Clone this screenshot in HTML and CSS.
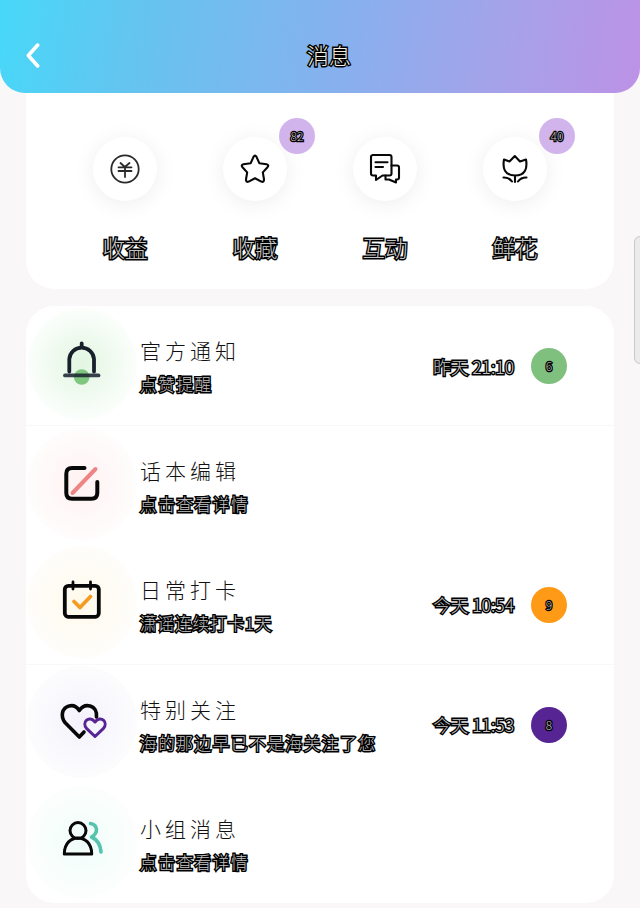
FILE: index.html
```html
<!DOCTYPE html>
<html lang="zh-CN">
<head>
  <meta charset="UTF-8" />
  <meta name="viewport" content="width=device-width, initial-scale=1" />
  <title>消息</title>
  <link rel="stylesheet" href="styles.css">
</head>
<body>

<header>
  <svg class="back" viewBox="0 0 16 26"><path d="M13 3 L4 13 L13 23" /></svg>
  <h1 class="outlined">消息</h1>
</header>

<main>
  <section class="card shortcuts">
    <div class="shortcut">
      <div class="bubble">
        <svg viewBox="0 0 32 32" class="thin">
          <circle cx="16" cy="16" r="13.7" />
          <path d="M11.5 10 L15.8 14 L20.5 10 M9.5 14.3 H22.5 M9.5 18 H22.5 M16 14 V24" />
        </svg>
      </div>
      <span class="outlined">收益</span>
    </div>
    <div class="shortcut">
      <div class="bubble">
        <svg viewBox="0 0 32 32">
          <path d="M14.5 3.8 Q16 1.4 17.5 3.8 L20.3 10.2 L27.6 11.2 Q30.3 12 28.5 14.2 L23.8 19.4 L25 26.3 Q25.1 29.6 22.3 28.6 L16 25.3 L9.7 28.6 Q6.9 29.6 7 26.3 L8.2 19.4 L3.5 14.2 Q1.7 12 4.4 11.2 L11.7 10.2 Z" />
        </svg>
        <b class="count outlined">82</b>
      </div>
      <span class="outlined">收藏</span>
    </div>
    <div class="shortcut">
      <div class="bubble">
        <svg viewBox="0 0 32 32">
          <path d="M3.5 2 H20.5 Q22.5 2 22.5 4 V20.5 Q22.5 22.5 20.5 22.5 H13.5 L7 27 V22.5 H4 Q2 22.5 2 20.5 V4 Q2 2 4 2 M6.5 9.3 H18.5 M6.5 14 H14" />
          <path d="M22.5 12.5 H28 Q30 12.5 30 14.5 V24.5 Q30 26.5 28 26.5 H27 V29.5 L20 26.5 H16.5 V22.5" />
        </svg>
      </div>
      <span class="outlined">互动</span>
    </div>
    <div class="shortcut">
      <div class="bubble">
        <svg viewBox="0 0 32 32">
          <path d="M5 6.5 L10.5 8.5 L15.8 3 L21 8.5 L27 6.5 C28.5 15 26.5 22.5 16 22.5 C5.5 22.5 3.5 15 5 6.5 Z M16 22.5 V29 M4.5 24.5 Q10 24.3 13 28.5 M27.5 24.5 Q22 24.3 19 28.5" />
        </svg>
        <b class="count outlined">40</b>
      </div>
      <span class="outlined">鲜花</span>
    </div>
  </section>

  <section class="card messages">
    <article class="message line">
      <div class="halo green">
        <svg viewBox="0 0 50 50">
          <circle cx="24.7" cy="38" r="7.8" fill="#7fc67f" stroke="none" />
          <path d="M12.3 32.5 V20 A12.4 12.4 0 0 1 37 20 V32.5 M24.7 7.5 V4.5" stroke="#18202c" stroke-width="3.8" />
          <path d="M8 36.4 H41.5" stroke="#18202c" stroke-width="3.8" opacity=".85" />
        </svg>
      </div>
      <div class="text">
        <h2>官方通知</h2>
        <p class="outlined">点赞提醒</p>
      </div>
      <time class="outlined">昨天 21:10</time>
      <b class="badge outlined green">6</b>
    </article>
    <article class="message">
      <div class="halo red">
        <svg viewBox="0 0 50 50">
          <path d="M27.5 9 H15 Q9.3 9 9.3 14.7 V34 Q9.3 39.7 15 39.7 H34.5 Q40.3 39.7 40.3 34 V23" stroke-width="4" />
          <path d="M15.5 34 L38.5 10" stroke="#ed8585" stroke-width="4" />
        </svg>
      </div>
      <div class="text">
        <h2>话本编辑</h2>
        <p class="outlined">点击查看详情</p>
      </div>
    </article>
    <article class="message line">
      <div class="halo yellow">
        <svg viewBox="0 0 50 50">
          <rect x="7.8" y="8.8" width="34" height="31" rx="3.5" stroke-width="3.8" />
          <path d="M16 5 V12 M33.5 5 V12" stroke-width="2.8" />
          <path d="M17 24.5 L23 30.5 L33.5 19.5" stroke="#f39b23" stroke-width="3.8" />
        </svg>
      </div>
      <div class="text">
        <h2>日常打卡</h2>
        <p class="outlined tight">潇谣连续打卡1天</p>
      </div>
      <time class="outlined">今天 10:54</time>
      <b class="badge outlined orange">9</b>
    </article>
    <article class="message">
      <div class="halo purple">
        <svg viewBox="0 0 50 50">
          <path d="M27 35 L22.3 40 L8 25.5 C3.5 20 4.5 11 12 9 C17 7.5 20 10 22.3 13.5 C25 9.5 28.5 7.8 33 9 C38 10.3 40 15 39.5 20" stroke-width="3.6" />
          <path d="M38 39.5 L29.5 31.3 C24.5 25.5 32 17.5 38 25 C44 17.5 51.5 25.5 46.5 31.3 Z" stroke="#562493" stroke-width="3" />
        </svg>
      </div>
      <div class="text">
        <h2>特别关注</h2>
        <p class="outlined">海的那边早已不是海关注了您</p>
      </div>
      <time class="outlined">今天 11:53</time>
      <b class="badge outlined violet">8</b>
    </article>
    <article class="message">
      <div class="halo teal">
        <svg viewBox="0 0 50 50">
          <path d="M33.5 6.5 C41 8 41.5 16 34.5 20 C41 23 43.5 28 44 35" stroke="#55c3ad" stroke-width="3.6" />
          <circle cx="21" cy="13.6" r="8" stroke-width="3" />
          <path d="M7.3 37 C7.3 15.5 34.7 15.5 34.7 37 Z" stroke-width="3" />
        </svg>
      </div>
      <div class="text">
        <h2>小组消息</h2>
        <p class="outlined">点击查看详情</p>
      </div>
    </article>
  </section>
</main>

<div class="edge-handle"></div>

</body>
</html>
```
FILE: styles.css
```css
* {
  box-sizing: border-box;
}
html {
  overflow: hidden;
}
body {
  font-family: "Noto Sans CJK SC", sans-serif;
  background: #f9f7f8;
  margin: 0;
  height: 908px;
  overflow: hidden;
  color: #111;
}
h1, h2, p {
  margin: 0;
  font-weight: 400;
}
svg {
  fill: none;
  stroke: #080808;
  stroke-width: 2.1;
  stroke-linecap: round;
  stroke-linejoin: round;
}
header {
  position: relative;
  height: 93px;
  padding-top: 15px;
  display: flex;
  align-items: center;
  justify-content: center;
  background: linear-gradient(100deg, #48d7f8 1%, #65c4f0 22%, #88b0ee 54%, #a5a2e9 78%, #bd92e6 100%);
  border-radius: 0 0 25px 25px;
  z-index: 1;
}
.back {
  position: absolute;
  left: 24px;
  top: 42px;
  width: 17px;
  height: 27px;
  stroke: #fff;
  stroke-width: 3.6;
}
h1 {
  font-size: 22px;
  line-height: 30px;
  padding-left: 18px;
}

/* light letters with a heavy black edge */
.outlined {
  color: #c4c4c4;
  font-weight: 300;
  -webkit-text-stroke: 2.8px #000;
  paint-order: stroke fill;
}
h1.outlined {
  color: #f3eede;
}

main {
  padding: 0 26px;
}
.card {
  background: #fff;
  border-radius: 28px;
}
.shortcuts {
  height: 221px;
  margin-top: -25px;
  padding: 69px 34px 0;
  display: grid;
  grid-template-columns: repeat(4, 130px);
}
.shortcut {
  display: flex;
  flex-direction: column;
  align-items: center;
  gap: 31px;
  font-size: 22.5px;
  line-height: 30px;
}
.bubble {
  position: relative;
  width: 64px;
  height: 64px;
  display: grid;
  place-items: center;
  border-radius: 50%;
  background: #fff;
  box-shadow: 0 3px 22px rgba(0, 0, 0, 0.07);
}
.bubble svg {
  width: 32px;
  height: 32px;
}
.bubble .thin {
  stroke: #2a2a2a;
  stroke-width: 1.8;
}
.count {
  position: absolute;
  left: 56px;
  top: -19px;
  width: 36px;
  height: 36px;
  border-radius: 50%;
  background: #d1b4ec;
  font-size: 12px;
  line-height: 35px;
  text-align: center;
}

.messages {
  height: 597px;
  margin-top: 17px;
  padding-top: 1px;
  overflow: hidden;
  display: grid;
  grid-template-rows: repeat(5, 119.4px);
}
.message {
  display: flex;
  align-items: center;
  padding-right: 47px;
}
.line {
  border-bottom: 1px solid #f8f8f8;
}
.halo {
  width: 110px;
  height: 112px;
  margin: 0 3px 5px 1px;
  border-radius: 50%;
  display: grid;
  place-items: center;
}
.halo svg {
  width: 50px;
  height: 50px;
}
.halo.green {
  background: radial-gradient(circle, #e2f6e2, #f2fbf2 45%, #fbfefb 70%);
}
.halo.red {
  background: radial-gradient(circle, #fff1f1, #fff8f8 40%, #fefcfc 70%);
}
.halo.yellow {
  background: radial-gradient(circle, #fff9ea, #fffcf5 40%, #fefdfa 70%);
}
.halo.purple {
  background: radial-gradient(circle, #f5f1fc, #f9f8fd 40%, #fcfcfd 70%);
}
.halo.teal {
  background: radial-gradient(circle, #effcf9, #f7fefc 40%, #fcfefd 70%);
}
.text {
  flex: 1;
  white-space: nowrap;
}
h2 {
  font-size: 21px;
  font-weight: 300;
  line-height: 32px;
  letter-spacing: 4px;
}
.text p {
  margin-top: 4px;
  font-size: 16.5px;
  line-height: 28px;
  letter-spacing: 1.7px;
}
.text .tight {
  letter-spacing: 1px;
}
time {
  margin-right: 17px;
  font-size: 17.5px;
}
.badge {
  width: 36px;
  height: 36px;
  border-radius: 50%;
  font-size: 12px;
  line-height: 35px;
  text-align: center;
}
.count,
.badge {
  -webkit-text-stroke-width: 2.4px;
}
.badge.green {
  background: #7fc07f;
}
.badge.orange {
  background: #ff9a17;
}
.badge.violet {
  background: #562493;
}

.edge-handle {
  position: absolute;
  left: 634px;
  top: 236px;
  width: 12px;
  height: 128px;
  border: 1px solid #c9c9c9;
  border-radius: 6px;
  background: #ebebeb;
}
```
